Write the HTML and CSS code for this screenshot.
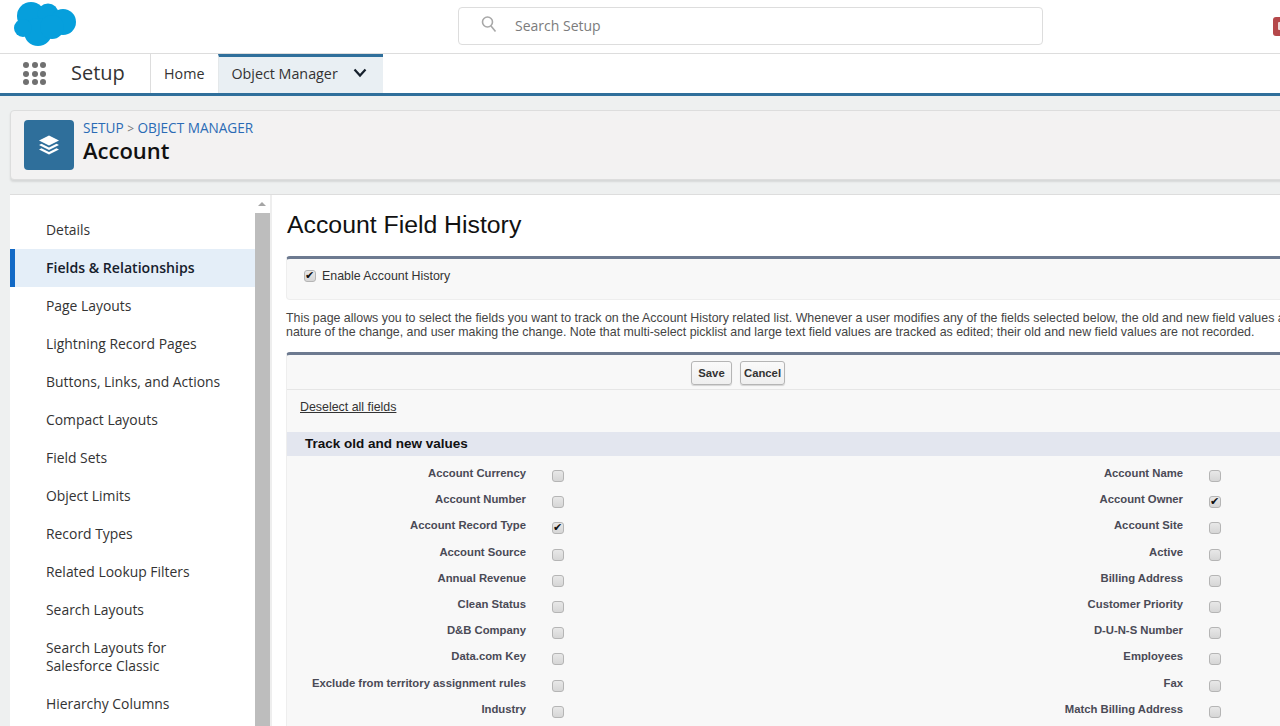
FILE: index.html
```html
<!DOCTYPE html>
<html lang="en">

<head>
    <meta charset="UTF-8">
    <meta name="viewport" content="width=device-width, initial-scale=1.0">
    <title>Account Field History</title>
    <link rel="stylesheet" href="styles.css">
</head>

<body>
    <header class="topbar">
        <svg class="logo" width="62" height="44" viewBox="14 3 62 44">
            <g fill="#069fdc">
                <circle cx="31" cy="17" r="14" />
                <circle cx="48" cy="15" r="10.5" />
                <circle cx="63" cy="23" r="13" />
                <circle cx="38" cy="33" r="14" />
                <circle cx="23" cy="29" r="9" />
                <circle cx="52" cy="28" r="12" />
            </g>
        </svg>
        <div class="search">
            <svg width="18" height="18" viewBox="0 0 18 18" fill="none" stroke="#a8a8a8" stroke-width="1.6">
                <circle cx="7.5" cy="7" r="5" />
                <path d="M11 11l4.5 5.5" />
            </svg>
            <span>Search Setup</span>
        </div>
        <div class="avatar"></div>
    </header>

    <nav class="navbar">
        <div class="app-launcher">
            <i></i><i></i><i></i><i></i><i></i><i></i><i></i><i></i><i></i>
        </div>
        <div class="app-name">Setup</div>
        <a class="nav-link">Home</a>
        <a class="nav-link active">Object Manager
            <svg width="14" height="10" viewBox="0 0 14 10" fill="none" stroke="#16202c" stroke-width="2.2">
                <path d="M1.5 1.5L7 7.5l5.5-6" />
            </svg>
        </a>
    </nav>

    <section class="page-head">
        <div class="head-icon">
            <svg width="24" height="24" viewBox="0 0 24 24" fill="#fff">
                <path d="M12 2.5l10 5-10 5-10-5z" />
                <path d="M4.500 10.800L12 14.500l7.500-3.700 2.500 1.300-10 5-10-5z" />
                <path d="M4.500 15.300L12 19l7.500-3.700 2.500 1.300-10 5-10-5z" />
            </svg>
        </div>
        <div class="head-text">
            <div class="crumbs"><a>SETUP</a> <span>&gt;</span> <a>OBJECT MANAGER</a></div>
            <h1>Account</h1>
        </div>
    </section>

    <div class="content">
        <aside class="sidebar">
            <ul class="side-list">
                <li>Details</li>
                <li class="active">Fields &amp; Relationships</li>
                <li>Page Layouts</li>
                <li>Lightning Record Pages</li>
                <li>Buttons, Links, and Actions</li>
                <li>Compact Layouts</li>
                <li>Field Sets</li>
                <li>Object Limits</li>
                <li>Record Types</li>
                <li>Related Lookup Filters</li>
                <li>Search Layouts</li>
                <li class="two-line">Search Layouts for<br>Salesforce Classic</li>
                <li>Hierarchy Columns</li>
            </ul>
            <div class="scrollbar">
                <div class="scroll-arrow"></div>
                <div class="scroll-thumb"></div>
            </div>
        </aside>

        <main class="main">
            <h2>Account Field History</h2>

            <div class="box enable-box">
                <label><input type="checkbox" checked> Enable Account History</label>
            </div>

            <p class="help">
                <span>This page allows you to select the fields you want to track on the Account History related list. Whenever a user modifies any of the fields selected below, the old and new field values are added to the History related list as well as the date, time,</span>
                <span>nature of the change, and user making the change. Note that multi-select picklist and large text field values are tracked as edited; their old and new field values are not recorded.</span>
            </p>

            <div class="box fields-box">
                <div class="buttons">
                    <button class="save">Save</button>
                    <button>Cancel</button>
                </div>
                <div class="deselect"><a>Deselect all fields</a></div>
                <h3>Track old and new values</h3>
                <div class="field-grid">
                    <label>Account Currency</label><span><input type="checkbox"></span>
                    <label>Account Name</label><span><input type="checkbox"></span>
                    <label>Account Number</label><span><input type="checkbox"></span>
                    <label>Account Owner</label><span><input type="checkbox" checked></span>
                    <label>Account Record Type</label><span><input type="checkbox" checked></span>
                    <label>Account Site</label><span><input type="checkbox"></span>
                    <label>Account Source</label><span><input type="checkbox"></span>
                    <label>Active</label><span><input type="checkbox"></span>
                    <label>Annual Revenue</label><span><input type="checkbox"></span>
                    <label>Billing Address</label><span><input type="checkbox"></span>
                    <label>Clean Status</label><span><input type="checkbox"></span>
                    <label>Customer Priority</label><span><input type="checkbox"></span>
                    <label>D&amp;B Company</label><span><input type="checkbox"></span>
                    <label>D-U-N-S Number</label><span><input type="checkbox"></span>
                    <label>Data.com Key</label><span><input type="checkbox"></span>
                    <label>Employees</label><span><input type="checkbox"></span>
                    <label>Exclude from territory assignment rules</label><span><input type="checkbox"></span>
                    <label>Fax</label><span><input type="checkbox"></span>
                    <label>Industry</label><span><input type="checkbox"></span>
                    <label>Match Billing Address</label><span><input type="checkbox"></span>
                </div>
            </div>
        </main>
    </div>
</body>

</html>
```

FILE: styles.css
```css
html,
body {
    height: 726px;
    overflow: hidden;
}

body {
    margin: 0;
    font-family: "Open Sans", sans-serif;
    background-color: #eef0f0;
    color: #16202c;
}

/* top bar */
.topbar {
    display: flex;
    align-items: center;
    height: 53px;
    padding-left: 14px;
    background-color: white;
    border-bottom: 1px solid #ddd;
}

.logo {
    flex: none;
    margin-top: -3px;
    margin-bottom: 3px;
}

.search {
    flex: none;
    display: flex;
    align-items: center;
    gap: 17px;
    box-sizing: border-box;
    width: 585px;
    height: 38px;
    margin-left: 382px;
    margin-bottom: 1px;
    padding-left: 21px;
    padding-bottom: 1px;
    border: 1px solid #ddd;
    border-radius: 4px;
    color: #7c7c7c;
    font-size: 14px;
}

.search svg {
    margin-top: -4px;
}

.avatar {
    flex: none;
    position: relative;
    width: 20px;
    height: 19px;
    margin-left: 230px;
    border-radius: 3px;
    background-color: #b5484a;
}

.avatar::after {
    content: "";
    position: absolute;
    left: 5px;
    top: 5px;
    width: 3px;
    height: 8px;
    border-radius: 1px 0 0 1px;
    background-color: #efd9d9;
}

/* nav */
.navbar {
    display: flex;
    height: 39px;
    background-color: white;
    border-bottom: 3px solid #2f6f9b;
}

.app-launcher {
    display: grid;
    grid-template-columns: repeat(3, 6px);
    gap: 2.500px;
    align-content: center;
    width: 48px;
    padding-left: 23px;
}

.app-launcher i {
    width: 6px;
    height: 6px;
    border-radius: 50%;
    background-color: #707070;
}

.app-name {
    width: 79px;
    font-size: 20px;
    line-height: 38px;
    color: #333;
}

.nav-link {
    display: flex;
    align-items: center;
    padding: 0 14px 0 13px;
    font-size: 14.300px;
    color: #333;
    border-left: 1px solid #ddd;
}

.nav-link.active {
    gap: 15px;
    width: 165px;
    box-sizing: border-box;
    padding-left: 12px;
    padding-bottom: 4px;
    border-left: 1px solid #e4e8ea;
    border-top: 3px solid #2f6f9b;
    background-color: #e9eff3;
}

/* object header */
.page-head {
    display: flex;
    align-items: center;
    gap: 9px;
    box-sizing: border-box;
    height: 70px;
    margin: 14px -10px 14px 10px;
    padding-left: 13px;
    background-color: #f3f2f2;
    border: 1px solid #ddd;
    border-radius: 4px;
    box-shadow: 0 2px 2px rgba(0, 0, 0, 0.1);
}

.head-icon {
    display: flex;
    align-items: center;
    justify-content: center;
    width: 50px;
    height: 50px;
    border-radius: 4px;
    background-color: #2f6f9b;
}

.head-text {
    padding-bottom: 8px;
}

.crumbs {
    font-size: 13.600px;
    line-height: 16px;
    color: #2a6bb5;
}

.crumbs span {
    color: #777;
    font-size: 12px;
}

h1 {
    margin: 1px 0 0;
    font-size: 22px;
    font-weight: 600;
    line-height: 24px;
    color: #111;
}

/* sidebar + main */
.content {
    display: flex;
    height: 532px;
    margin-left: 10px;
    background-color: white;
    border-top: 1px solid #ddd;
}

.sidebar {
    flex: none;
    display: flex;
    width: 262px;
    border-right: 2px solid #eee;
    box-sizing: border-box;
}

.side-list {
    flex: none;
    width: 245px;
    margin: 0;
    padding: 16px 0 0;
    list-style: none;
    font-size: 13.900px;
    color: #333;
}

.side-list li {
    box-sizing: border-box;
    height: 38px;
    padding-left: 36px;
    line-height: 38px;
}

.side-list li.active {
    padding-left: 31px;
    font-size: 14.100px;
    font-weight: 600;
    color: #16202c;
    background-color: #e4eef8;
    border-left: 5px solid #1269c5;
}

.side-list li.two-line {
    height: 56px;
    padding-top: 10px;
    line-height: 18px;
}

.scrollbar {
    flex: none;
    width: 15px;
}

.scroll-arrow {
    height: 18px;
    position: relative;
}

.scroll-arrow::after {
    content: "";
    position: absolute;
    left: 3px;
    top: 7px;
    border-left: 4px solid transparent;
    border-right: 4px solid transparent;
    border-bottom: 4px solid #a5a5a5;
}

.scroll-thumb {
    height: 514px;
    background-color: #bdbdbd;
}

.main {
    flex: 1;
    min-width: 0;
    overflow: hidden;
    padding-left: 14px;
    font-family: "Liberation Sans", Arial, sans-serif;
    font-size: 12.400px;
    color: #333;
}

h2 {
    margin: 15px 0 16px 1px;
    font-size: 24.800px;
    font-weight: 400;
    line-height: 30px;
    color: #111;
    white-space: nowrap;
}

.box {
    width: 1100px;
    box-sizing: border-box;
    background-color: #f8f8f8;
    border: 1px solid #eee;
    border-top: 3px solid #6d7a90;
    border-radius: 4px 0 0 4px;
}

.enable-box {
    height: 44px;
    padding: 10px 0 0 17px;
}

.enable-box label {
    display: flex;
    align-items: center;
    gap: 6px;
    line-height: 14px;
}

.help {
    margin: 12px 0 13px;
    line-height: 13.500px;
    color: #444;
    white-space: nowrap;
}

.help span {
    display: block;
}

input[type="checkbox"] {
    appearance: none;
    position: relative;
    display: block;
    box-sizing: border-box;
    width: 12px;
    height: 12px;
    margin: 0;
    border: 1px solid #b5b5b5;
    border-radius: 3px;
    background: linear-gradient(#e8e8e8, #d6d6d6);
}

input[type="checkbox"]:checked::after {
    content: "✔";
    position: absolute;
    left: 0;
    top: -2px;
    font-size: 11px;
    line-height: 13px;
    color: #111;
}

.buttons {
    display: flex;
    gap: 8px;
    height: 35px;
    box-sizing: border-box;
    padding: 6px 0 0 404px;
    border-bottom: 1px solid #e6e6e6;
}

button {
    height: 24px;
    padding: 0 3px;
    font-family: "Liberation Sans", Arial, sans-serif;
    font-size: 11.300px;
    font-weight: 700;
    color: #333;
    background: linear-gradient(#fafafa, #efefef);
    border: 1px solid #b5b5b5;
    border-radius: 3px;
    box-shadow: 0 1px 1px rgba(0, 0, 0, 0.15);
}

.save {
    width: 41px;
}

.deselect {
    height: 42px;
    box-sizing: border-box;
    padding: 10px 0 0 13px;
    line-height: 14px;
}

.deselect a {
    text-decoration: underline;
}

h3 {
    margin: 0;
    height: 24px;
    padding-left: 18px;
    font-size: 13.500px;
    font-weight: 700;
    line-height: 23px;
    color: #111;
    background-color: #e3e6ef;
}

.field-grid {
    display: grid;
    grid-template-columns: 239px 418px 239px 60px;
    grid-auto-rows: 26.200px;
    padding: 4px 0 40px;
}

.field-grid label {
    font-size: 11.300px;
    font-weight: 700;
    text-align: right;
    color: #4a4a56;
    line-height: 26px;
    white-space: nowrap;
}

.field-grid span {
    padding: 10px 0 0 26px;
}
```
